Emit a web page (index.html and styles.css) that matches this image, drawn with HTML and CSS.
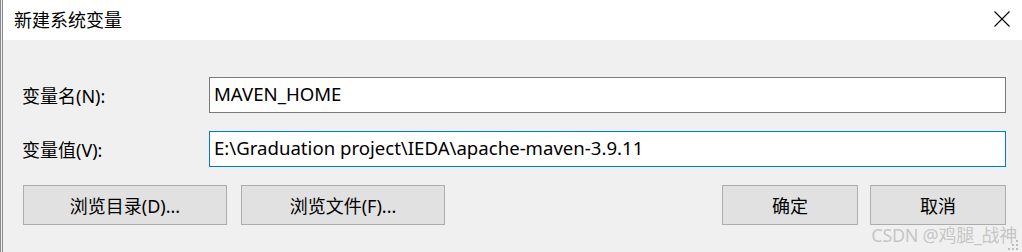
FILE: index.html
```html
<!DOCTYPE html>
<html lang="zh-CN">
<head>
<meta charset="UTF-8">
<title>新建系统变量</title>
<link rel="stylesheet" href="styles.css">
</head>
<body>
<div class="dialog">
  <div class="titlebar">
    <span class="title">新建系统变量</span>
    <span class="close">
      <svg width="16" height="16" viewBox="0 0 16 16"><path d="M0.5 0.5 L15.5 15.5 M15.5 0.5 L0.5 15.5" stroke="#000" stroke-width="1.1" fill="none"/></svg>
    </span>
  </div>
  <div class="content">
    <div class="row">
      <label class="label" for="varname">变量名(N):</label>
      <div class="field" id="varname">MAVEN_HOME</div>
    </div>
    <div class="row">
      <label class="label" for="varvalue">变量值(V):</label>
      <div class="field focus" id="varvalue">E:\Graduation project\IEDA\apache-maven-3.9.11</div>
    </div>
    <div class="buttons">
      <div class="left">
        <div class="btn wide">浏览目录(D)...</div>
        <div class="btn wide">浏览文件(F)...</div>
      </div>
      <div class="right">
        <div class="btn">确定</div>
        <div class="btn">取消</div>
      </div>
    </div>
  </div>
  <div class="mark">CSDN @鸡腿_战神</div>
  <svg class="grip" width="12" height="12" viewBox="0 0 12 12">
    <rect x="8" y="0" width="2" height="2" fill="#bdbdbd"/>
    <rect x="4" y="4" width="2" height="2" fill="#bdbdbd"/>
    <rect x="8" y="4" width="2" height="2" fill="#bdbdbd"/>
    <rect x="0" y="8" width="2" height="2" fill="#bdbdbd"/>
    <rect x="4" y="8" width="2" height="2" fill="#bdbdbd"/>
    <rect x="8" y="8" width="2" height="2" fill="#bdbdbd"/>
  </svg>
</div>
</body>
</html>
```

FILE: styles.css
```css
body {
    margin: 0;
    font-family: "Noto Sans", "Noto Sans CJK SC", sans-serif;
    color: #000;
}
.dialog {
    position: relative;
    width: 1022px;
    height: 252px;
    box-sizing: border-box;
    border-left: 3px double #8a8a8a;
    background-color: #f0f0f0;
    overflow: hidden;
}
.titlebar {
    height: 40px;
    background-color: #fff;
    display: flex;
    align-items: center;
    justify-content: space-between;
    padding: 0 12px 0 11px;
}
.title {
    font-size: 18px;
    margin-top: -3px;
}
.close {
    display: flex;
    margin-top: -3px;
}
.content {
    padding: 37px 16px 0 19px;
}
.row {
    display: flex;
    align-items: center;
    margin-bottom: 18px;
}
.label {
    width: 187px;
    font-size: 18px;
}
.field {
    flex: 1;
    height: 36px;
    box-sizing: border-box;
    border: 1px solid #7a7a7a;
    background-color: #fff;
    font-size: 18.6px;
    line-height: 32px;
    padding-left: 4px;
    white-space: nowrap;
}
.field.focus {
    border-color: #0078d7;
}
.buttons {
    display: flex;
    justify-content: space-between;
    margin-top: 7px;
    padding-left: 1px;
}
.left, .right {
    display: flex;
    gap: 12px;
}
.left {
    gap: 14px;
}
.btn {
    width: 136px;
    height: 40px;
    box-sizing: border-box;
    border: 1px solid #adadad;
    background-color: #e1e1e1;
    font-size: 18px;
    display: flex;
    align-items: center;
    justify-content: center;
}
.btn.wide {
    width: 204px;
}
.mark {
    position: absolute;
    right: 5px;
    bottom: 5px;
    font-size: 18px;
    color: rgba(160, 160, 160, 0.55);
    letter-spacing: -0.3px;
}
.grip {
    position: absolute;
    right: 2px;
    bottom: 0;
}
```
